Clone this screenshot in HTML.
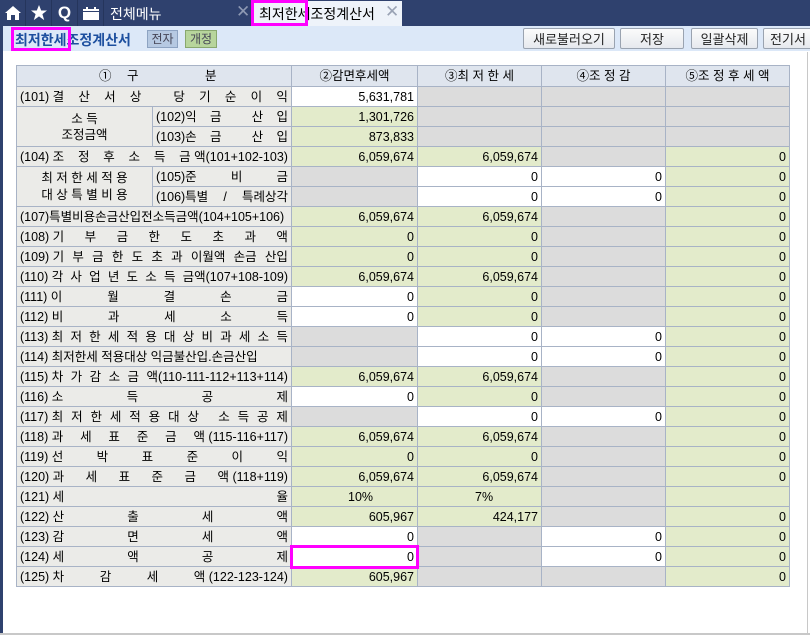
<!DOCTYPE html>
<html><head><meta charset="utf-8">
<style>
*{margin:0;padding:0;box-sizing:border-box}
body{width:810px;height:635px;overflow:hidden;background:#fff;font-family:"Liberation Sans","Noto Sans CJK KR",sans-serif;font-size:13px;color:#000;position:relative}
.top{position:absolute;left:0;top:0;width:810px;height:26px;background:#2f416e}
.ic{position:absolute;top:0;height:26px;width:26px;border-right:1px solid #25355c;color:#fff;display:flex;align-items:center;justify-content:center}
.bar2{position:absolute;left:0;top:26px;width:810px;height:25px;background:#dce8f8}
.btn{position:absolute;top:28px;height:21px;border:1px solid #9aa3b0;border-radius:2px;background:linear-gradient(#fbfbfb,#e6e9ee);font-size:13px;display:flex;align-items:center;justify-content:center;color:#222}
.mag{position:absolute;border:3px solid #ff00ff}
table{position:absolute;left:16px;top:65px;border-collapse:collapse;table-layout:fixed}
td{border:1px solid #a8b3c6;height:20px;padding:0 3px;white-space:nowrap;font-size:12.5px;line-height:18px;overflow:hidden}
.L{background:#ebebe8}
.H{background:#dfe5ee;text-align:center;height:21px}
.g{background:#e3ebcb;text-align:right}
.w{background:#fff;text-align:right}
.x{background:#dcdcdc}
.sp{display:flex;justify-content:space-between}
</style></head><body>
<div class="top">
 <div class="ic" style="left:0"><svg width="16" height="14" viewBox="0 0 16 14"><path d="M8 0L0 7h2v7h4V9h4v5h4V7h2z" fill="#fff"/></svg></div>
 <div class="ic" style="left:26px"><svg width="16" height="16" viewBox="0 0 16 16"><path d="M8 0l2.2 5.5H16l-4.6 3.6 1.8 6L8 11.4 2.8 15.1l1.8-6L0 5.5h5.8z" fill="#fff"/></svg></div>
 <div class="ic" style="left:52px;font-weight:bold;font-size:17px">Q</div>
 <div class="ic" style="left:78px"><svg width="16" height="13" viewBox="0 0 16 13"><rect x="0" y="2" width="16" height="11" fill="#fff"/><rect x="3" y="0" width="2" height="4" fill="#fff"/><rect x="11" y="0" width="2" height="4" fill="#fff"/><rect x="0" y="4" width="16" height="1" fill="#2f416e"/></svg></div>
 <div style="position:absolute;left:110px;top:4px;color:#fff;font-size:14px">전체메뉴</div>
 <div style="position:absolute;left:236px;top:2px;color:#8e99b3;font-size:17px">✕</div>
 <div style="position:absolute;left:252px;top:1px;width:150px;height:25px;background:#eef3fa"></div>
 <div style="position:absolute;left:259px;top:4px;color:#000;font-size:14px">최저한세조정계산서</div>
 <div style="position:absolute;left:385px;top:2px;color:#9aa3b5;font-size:17px">✕</div>
</div>
<div class="mag" style="left:251px;top:0;width:57px;height:26px"></div>
<div class="bar2"></div>
<div style="position:absolute;left:15px;top:30px;color:#1d4f9f;font-weight:bold;font-size:14px">최저한세조정계산서</div>
<div class="mag" style="left:11px;top:27px;width:60px;height:24px"></div>
<div style="position:absolute;left:147px;top:30px;width:31px;height:18px;background:#b6c9e2;border:1px solid #8da3c2;font-size:12px;color:#445;text-align:center;line-height:16px">전자</div>
<div style="position:absolute;left:185px;top:30px;width:32px;height:18px;background:#b7d59c;border:1px solid #89a86e;font-size:12px;color:#445;text-align:center;line-height:16px">개정</div>
<div class="btn" style="left:523px;width:92px">새로불러오기</div>
<div class="btn" style="left:620px;width:64px">저장</div>
<div class="btn" style="left:691px;width:67px">일괄삭제</div>
<div class="btn" style="left:763px;width:50px">전기서</div>
<div style="position:absolute;left:0;top:26px;width:3px;height:609px;background:#2f416e"></div>
<div style="position:absolute;left:807px;top:52px;width:1px;height:582px;background:#c8c8c8"></div>
<div style="position:absolute;left:0;top:633px;width:810px;height:2px;background:#c8c8c8"></div>
<table>
<colgroup><col style="width:136px"><col style="width:139px"><col style="width:126px"><col style="width:124px"><col style="width:124px"><col style="width:124px"></colgroup>
<tr><td class="H" colspan="2" style="position:relative"><span style="position:absolute;left:82px;top:1px">①</span><span style="position:absolute;left:110px;top:1px">구</span><span style="position:absolute;left:188px;top:1px">분</span></td><td class="H">②감면후세액</td><td class="H">③최 저 한 세</td><td class="H">④조 정 감</td><td class="H">⑤조 정 후 세 액</td></tr>
<tr><td class="L" colspan="2"><div class="sp"><span>(101) 결</span><span>산</span><span>서</span><span>상</span><span>&nbsp;</span><span>당</span><span>기</span><span>순</span><span>이</span><span>익</span></div></td><td class="w">5,631,781</td><td class="x"></td><td class="x"></td><td class="x"></td></tr>
<tr><td class="L" rowspan="2" style="text-align:center;line-height:16px">소 득<br>조정금액</td><td class="L"><div class="sp"><span>(102)익</span><span>금</span><span>&nbsp;</span><span>산</span><span>입</span></div></td><td class="g">1,301,726</td><td class="x"></td><td class="x"></td><td class="x"></td></tr>
<tr><td class="L"><div class="sp"><span>(103)손</span><span>금</span><span>&nbsp;</span><span>산</span><span>입</span></div></td><td class="g">873,833</td><td class="x"></td><td class="x"></td><td class="x"></td></tr>
<tr><td class="L" colspan="2"><div class="sp"><span>(104) 조</span><span>정</span><span>후</span><span>소</span><span>득</span><span>금 액(101+102-103)</span></div></td><td class="g">6,059,674</td><td class="g">6,059,674</td><td class="x"></td><td class="g">0</td></tr>
<tr><td class="L" rowspan="2" style="text-align:center;line-height:17px">최 저 한 세 적 용<br>대 상 특 별 비 용</td><td class="L"><div class="sp"><span>(105)준</span><span>비</span><span>금</span></div></td><td class="x"></td><td class="w">0</td><td class="w">0</td><td class="g">0</td></tr>
<tr><td class="L"><div class="sp"><span>(106)특별</span><span>/</span><span>특례상각</span></div></td><td class="x"></td><td class="w">0</td><td class="w">0</td><td class="g">0</td></tr>
<tr><td class="L" colspan="2">(107)특별비용손금산입전소득금액(104+105+106)</td><td class="g">6,059,674</td><td class="g">6,059,674</td><td class="x"></td><td class="g">0</td></tr>
<tr><td class="L" colspan="2"><div class="sp"><span>(108) 기</span><span>부</span><span>금</span><span>한</span><span>도</span><span>초</span><span>과</span><span>액</span></div></td><td class="g">0</td><td class="g">0</td><td class="x"></td><td class="g">0</td></tr>
<tr><td class="L" colspan="2"><div class="sp"><span>(109) 기</span><span>부</span><span>금</span><span>한</span><span>도</span><span>초</span><span>과</span><span>이월액</span><span>손금</span><span>산입</span></div></td><td class="g">0</td><td class="g">0</td><td class="x"></td><td class="g">0</td></tr>
<tr><td class="L" colspan="2"><div class="sp"><span>(110) 각</span><span>사</span><span>업</span><span>년</span><span>도</span><span>소</span><span>득</span><span>금액(107+108-109)</span></div></td><td class="g">6,059,674</td><td class="g">6,059,674</td><td class="x"></td><td class="g">0</td></tr>
<tr><td class="L" colspan="2"><div class="sp"><span>(111) 이</span><span>월</span><span>결</span><span>손</span><span>금</span></div></td><td class="w">0</td><td class="g">0</td><td class="x"></td><td class="g">0</td></tr>
<tr><td class="L" colspan="2"><div class="sp"><span>(112) 비</span><span>과</span><span>세</span><span>소</span><span>득</span></div></td><td class="w">0</td><td class="g">0</td><td class="x"></td><td class="g">0</td></tr>
<tr><td class="L" colspan="2"><div class="sp"><span>(113) 최</span><span>저</span><span>한</span><span>세</span><span>적</span><span>용</span><span>대</span><span>상</span><span>비</span><span>과</span><span>세</span><span>소</span><span>득</span></div></td><td class="x"></td><td class="w">0</td><td class="w">0</td><td class="g">0</td></tr>
<tr><td class="L" colspan="2">(114) 최저한세 적용대상 익금불산입.손금산입</td><td class="x"></td><td class="w">0</td><td class="w">0</td><td class="g">0</td></tr>
<tr><td class="L" colspan="2"><div class="sp"><span>(115) 차</span><span>가</span><span>감</span><span>소</span><span>금</span><span>액(110-111-112+113+114)</span></div></td><td class="g">6,059,674</td><td class="g">6,059,674</td><td class="x"></td><td class="g">0</td></tr>
<tr><td class="L" colspan="2"><div class="sp"><span>(116) 소</span><span>득</span><span>공</span><span>제</span></div></td><td class="w">0</td><td class="g">0</td><td class="x"></td><td class="g">0</td></tr>
<tr><td class="L" colspan="2"><div class="sp"><span>(117) 최</span><span>저</span><span>한</span><span>세</span><span>적</span><span>용</span><span>대</span><span>상</span><span>&nbsp;</span><span>소</span><span>득</span><span>공</span><span>제</span></div></td><td class="x"></td><td class="w">0</td><td class="w">0</td><td class="g">0</td></tr>
<tr><td class="L" colspan="2"><div class="sp"><span>(118) 과</span><span>세</span><span>표</span><span>준</span><span>금</span><span>액 (115-116+117)</span></div></td><td class="g">6,059,674</td><td class="g">6,059,674</td><td class="x"></td><td class="g">0</td></tr>
<tr><td class="L" colspan="2"><div class="sp"><span>(119) 선</span><span>박</span><span>표</span><span>준</span><span>이</span><span>익</span></div></td><td class="g">0</td><td class="g">0</td><td class="x"></td><td class="g">0</td></tr>
<tr><td class="L" colspan="2"><div class="sp"><span>(120) 과</span><span>세</span><span>표</span><span>준</span><span>금</span><span>액 (118+119)</span></div></td><td class="g">6,059,674</td><td class="g">6,059,674</td><td class="x"></td><td class="g">0</td></tr>
<tr><td class="L" colspan="2"><div class="sp"><span>(121) 세</span><span>율</span></div></td><td class="g" style="text-align:left;padding-left:56px">10%</td><td class="g" style="text-align:left;padding-left:57px">7%</td><td class="x"></td><td class="g"></td></tr>
<tr><td class="L" colspan="2"><div class="sp"><span>(122) 산</span><span>출</span><span>세</span><span>액</span></div></td><td class="g">605,967</td><td class="g">424,177</td><td class="x"></td><td class="g">0</td></tr>
<tr><td class="L" colspan="2"><div class="sp"><span>(123) 감</span><span>면</span><span>세</span><span>액</span></div></td><td class="w">0</td><td class="x"></td><td class="w">0</td><td class="g">0</td></tr>
<tr><td class="L" colspan="2"><div class="sp"><span>(124) 세</span><span>액</span><span>공</span><span>제</span></div></td><td class="w">0</td><td class="x"></td><td class="w">0</td><td class="g">0</td></tr>
<tr><td class="L" colspan="2"><div class="sp"><span>(125) 차</span><span>감</span><span>세</span><span>액 (122-123-124)</span></div></td><td class="g">605,967</td><td class="x"></td><td class="x"></td><td class="g">0</td></tr>
</table>
<div class="mag" style="left:290px;top:545px;width:129px;height:24px"></div>
</body></html>
